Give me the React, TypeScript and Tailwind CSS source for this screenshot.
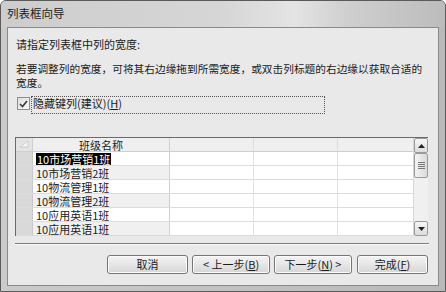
const rows = [
  '10市场营销1班',
  '10市场营销2班',
  '10物流管理1班',
  '10物流管理2班',
  '10应用英语1班',
  '10应用英语1班',
]

function Btn({ children, w }: { children: React.ReactNode; w: string }) {
  return (
    <div
      className={`${w} flex h-[19px] items-center justify-center whitespace-nowrap rounded-[3px] border border-[#767676] bg-gradient-to-b from-[#f4f4f4] via-[#e6e6e6] to-[#d6d6d6] text-[11px] leading-none text-[#1b1b1b] shadow-[inset_0_0_0_1px_#fbfbfb]`}
    >
      {children}
    </div>
  )
}

function Grid() {
  return (
    <div className="ml-[7px] flex h-[99px] w-[413px] overflow-hidden border-l border-t border-[#6a6a6a] bg-white">
      <div className="flex w-[397px] flex-col">
        {/* header */}
        <div className="flex h-[14px] shrink-0 border-b border-[#cfcfcf] bg-[#efefef]">
          <div className="relative w-[17px] border-r border-[#cfcfcf] bg-[#e4e4e4]">
            <svg className="absolute left-[3px] top-[2px]" width="10" height="8" viewBox="0 0 10 8">
              <path d="M1 7 L9 1 L9 7 Z" fill="#f6f6f6" stroke="#c4c4c4" strokeWidth="0.8" />
            </svg>
          </div>
          <div className="flex w-[137px] items-center justify-center overflow-hidden border-r border-[#cfcfcf] text-[11px] leading-[12px]">
            班级名称
          </div>
          <div className="w-[84px] border-r border-[#dedede]" />
          <div className="w-[84px] border-r border-[#dedede]" />
          <div className="w-[75px]" />
        </div>
        {rows.map((r, i) => (
          <div key={i} className="flex h-[14px] shrink-0 border-b border-[#dcdcdc]">
            <div className="w-[17px] border-r border-[#c8c8c8] bg-[#d9d9d9]" />
            <div
              className={`flex w-[137px] items-center overflow-hidden border-r border-[#cfcfcf] pl-[3px] text-[11px] leading-[12px] ${
                i % 2 === 1 ? 'bg-[#f0f0f0]' : 'bg-white'
              }`}
            >
              {i === 0 ? <span className="inline-block h-[12px] bg-black px-[1px] leading-[12px] text-white">{r}</span> : r}
            </div>
            <div className="w-[84px] border-r border-[#e2e2e2]" />
            <div className="w-[84px] border-r border-[#e2e2e2]" />
            <div className="w-[75px]" />
          </div>
        ))}
      </div>
      {/* scrollbar */}
      <div className="flex w-[15px] flex-col border-l border-[#d6d6d6] bg-[#f0f0f0]">
        <div className="flex h-[15px] items-center justify-center rounded-[2px] border border-[#9a9a9a] bg-gradient-to-b from-[#f6f6f6] to-[#dcdcdc]">
          <svg width="7" height="4" viewBox="0 0 7 4">
            <path d="M0 4 L3.5 0 L7 4 Z" fill="#222" />
          </svg>
        </div>
        <div className="flex h-[25px] flex-col items-center justify-center gap-[1px] rounded-[2px] border border-[#9a9a9a] bg-gradient-to-r from-[#f4f4f4] to-[#dadada]">
          <div className="h-px w-[7px] bg-[#7a7a7a]" />
          <div className="h-px w-[7px] bg-[#7a7a7a]" />
          <div className="h-px w-[7px] bg-[#7a7a7a]" />
          <div className="h-px w-[7px] bg-[#7a7a7a]" />
        </div>
        <div className="flex-1" />
        <div className="flex h-[15px] items-center justify-center rounded-[2px] border border-[#9a9a9a] bg-gradient-to-b from-[#f6f6f6] to-[#dcdcdc]">
          <svg width="7" height="4" viewBox="0 0 7 4">
            <path d="M0 0 L3.5 4 L7 0 Z" fill="#222" />
          </svg>
        </div>
      </div>
    </div>
  )
}

export default function App() {
  return (
    <div className="flex h-[292px] w-[446px] flex-col overflow-hidden rounded-t-[6px] border border-[#5a5a5a] bg-[#c6c6c6] font-['Noto_Sans_CJK_SC',sans-serif] text-[#1b1b1b]">
      {/* title bar */}
      <div className="flex h-[26px] shrink-0 items-center bg-[linear-gradient(90deg,#cdcdcd_0%,#d6d6d6_50%,#e4e4e4_66%,#cfcfcf_78%,#bcbcbc_100%)] pl-[6px] text-[11.5px] leading-none">
        列表框向导
      </div>
      <div className="flex flex-1 flex-col bg-gradient-to-r from-[#cbcbcb] to-[#b9b9b9] px-[6px] pb-[5px]">
        <div className="flex h-[259px] flex-col border border-[#8a8a8a] bg-[#e9e9e9]">
          <div className="ml-[8px] mt-[9px] h-[14px] whitespace-nowrap text-[11px] leading-[14px]">请指定列表框中列的宽度:</div>
          <div className="ml-[8px] mt-[11px] h-[28px] whitespace-nowrap text-[10.7px] leading-[14px]">
            若要调整列的宽度，可将其右边缘拖到所需宽度，或双击列标题的右边缘以获取合适的
            <br />
            宽度。
          </div>
          <div className="mt-[6px] flex h-[18px]">
            <div className="ml-[9px] mt-[1px] flex h-[13px] w-[13px] items-center justify-center border border-[#8e8e8e] bg-gradient-to-br from-[#dedede] to-[#f8f8f8]">
              <svg width="9" height="8" viewBox="0 0 9 8">
                <path d="M1 4 L3.5 6.5 L8 1" fill="none" stroke="#3a3a3a" strokeWidth="1.6" />
              </svg>
            </div>
            <div className="ml-[1px] h-[18px] w-[294px] whitespace-nowrap border border-dotted border-[#555] pl-[1px] text-[11px] leading-[12px]">
              隐藏键列(建议)(<span className="underline">H</span>)
            </div>
          </div>
          <div className="mt-[23px]">
            <Grid />
          </div>
          <div className="ml-[7px] mr-[9px] mt-[7px] h-[2px] border-b border-t border-b-[#fafafa] border-t-[#7c7c7c]" />
          <div className="mt-[10px] flex justify-end pr-[10px]">
            <Btn w="w-[81px]">取消</Btn>
            <div className="ml-[4px]">
              <Btn w="w-[78px]">
                &lt; 上一步(<span className="underline">B</span>)
              </Btn>
            </div>
            <div className="ml-[4px]">
              <Btn w="w-[78px]">
                下一步(<span className="underline">N</span>) &gt;
              </Btn>
            </div>
            <div className="ml-[5px]">
              <Btn w="w-[71px]">
                完成(<span className="underline">F</span>)
              </Btn>
            </div>
          </div>
        </div>
      </div>
    </div>
  )
}
